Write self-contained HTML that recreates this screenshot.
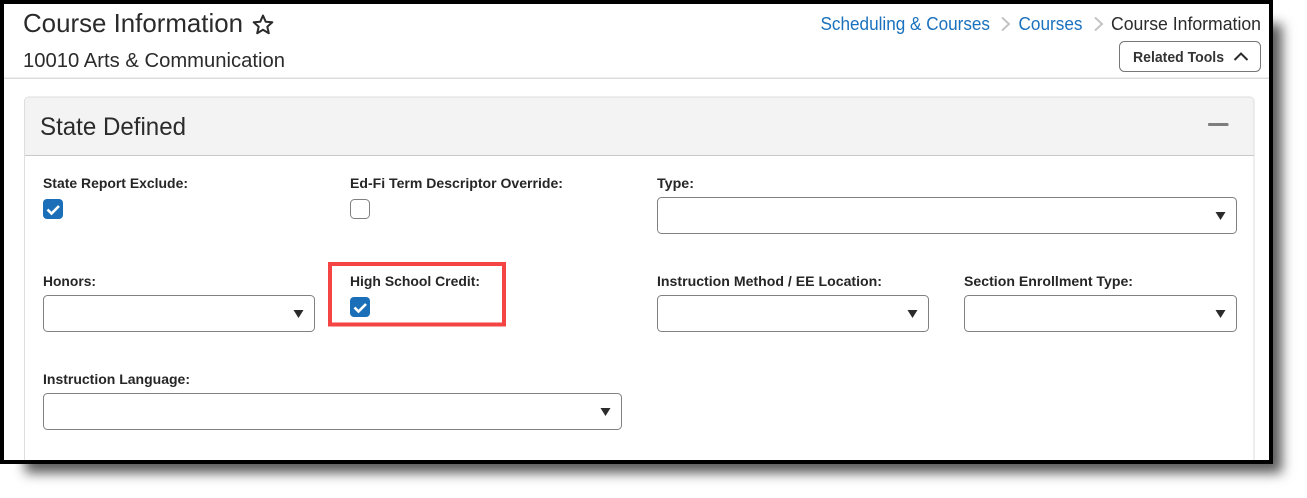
<!DOCTYPE html>
<html>
<head>
<meta charset="utf-8">
<style>
html,body{margin:0;padding:0;background:#fff;}
body{width:1307px;height:498px;overflow:hidden;position:relative;font-family:"Liberation Sans",sans-serif;}
#sh{position:absolute;left:25px;top:24px;width:1257px;height:449px;background:#5a5a5a;filter:blur(6px);}
#fr{position:absolute;left:0;top:0;width:1265px;height:456px;border:4px solid #000;background:#fff;}
svg{position:absolute;left:0;top:0;}
text{font-family:"Liberation Sans",sans-serif;fill:#2b2b2b;}
.l{font-size:14px;font-weight:bold;fill:#262626;}
.a{fill:#1a71bd;font-size:18px;}
.s{fill:#fff;stroke:#808080;stroke-width:1;}
</style>
</head>
<body>
<div id="sh"></div>
<div id="fr"></div>
<svg width="1307" height="498" viewBox="0 0 1307 498" xmlns="http://www.w3.org/2000/svg">
<rect x="4" y="77.5" width="1265" height="1.5" fill="#dcdcdc"/>

<text x="23" y="32" font-size="26" textLength="220" lengthAdjust="spacingAndGlyphs">Course Information</text>
<path d="M263 15.5l2.7 6.2 6.6.6-5 4.4 1.5 6.5-5.8-3.4-5.8 3.4 1.5-6.5-5-4.4 6.600-.6z" fill="none" stroke="#2b2b2b" stroke-width="2" stroke-linejoin="round"/>
<text x="23" y="67" font-size="20" textLength="262" lengthAdjust="spacingAndGlyphs">10010 Arts &amp; Communication</text>

<text class="a" x="820.5" y="30" textLength="169.5" lengthAdjust="spacingAndGlyphs">Scheduling &amp; Courses</text>
<path d="M1002 17.5l7 6.5-7 6.5" fill="none" stroke="#c4c4c4" stroke-width="2"/>
<text class="a" x="1018.5" y="30" textLength="64" lengthAdjust="spacingAndGlyphs">Courses</text>
<path d="M1095 17.5l7 6.5-7 6.5" fill="none" stroke="#c4c4c4" stroke-width="2"/>
<text x="1111" y="30" font-size="18" textLength="150" lengthAdjust="spacingAndGlyphs">Course Information</text>

<rect x="1119.5" y="41.5" width="141" height="30" rx="5" fill="#fff" stroke="#777"/>
<text x="1133" y="62" font-size="14.5" font-weight="bold" textLength="91" lengthAdjust="spacingAndGlyphs" style="fill:#333">Related Tools</text>
<path d="M1234.5 60l6.5-6.5 6.5 6.5" fill="none" stroke="#2b2b2b" stroke-width="2"/>

<path d="M24.5 460V101a4 4 0 0 1 4-4H1250a4 4 0 0 1 4 4V460" fill="#fff" stroke="#dedede"/>
<path d="M25 155V101a3.500 3.500 0 0 1 3.500-3.500H1250a3.500 3.500 0 0 1 3.500 3.500V155z" fill="#f3f3f3"/>
<rect x="25" y="155" width="1229" height="1" fill="#c9c9c9"/>
<text x="40" y="135" font-size="25" textLength="146" lengthAdjust="spacingAndGlyphs">State Defined</text>
<rect x="1208" y="123" width="20.500" height="3" rx="1" fill="#7d7d7d"/>

<text class="l" x="43" y="188" textLength="145" lengthAdjust="spacingAndGlyphs">State Report Exclude:</text>
<rect x="43" y="199" width="20" height="20" rx="4" fill="#1a6fb8"/>
<path d="M47.500 209.500l4 4 7.500-7.500" fill="none" stroke="#fff" stroke-width="2.600"/>

<text class="l" x="350" y="188" textLength="213" lengthAdjust="spacingAndGlyphs">Ed-Fi Term Descriptor Override:</text>
<rect x="350.500" y="199.500" width="19" height="19" rx="4" fill="#fff" stroke="#808080"/>

<text class="l" x="657" y="188" textLength="37" lengthAdjust="spacingAndGlyphs">Type:</text>
<rect class="s" x="657.500" y="197.500" width="579" height="36" rx="4"/>
<path d="M1215.500 212h10l-5 8z" fill="#2b2b2b"/>

<text class="l" x="43" y="286" textLength="53" lengthAdjust="spacingAndGlyphs">Honors:</text>
<rect class="s" x="43.500" y="295.500" width="271" height="36" rx="4"/>
<path d="M293.500 310h10l-5 8z" fill="#2b2b2b"/>

<text class="l" x="350" y="286" textLength="130" lengthAdjust="spacingAndGlyphs">High School Credit:</text>
<rect x="350" y="297" width="20" height="20" rx="4" fill="#1a6fb8"/>
<path d="M354.500 307.500l4 4 7.500-7.500" fill="none" stroke="#fff" stroke-width="2.600"/>
<rect x="330" y="264" width="174" height="60.500" fill="none" stroke="#f44444" stroke-width="4"/>

<text class="l" x="657" y="286" textLength="225" lengthAdjust="spacingAndGlyphs">Instruction Method / EE Location:</text>
<rect class="s" x="657.500" y="295.500" width="271" height="36" rx="4"/>
<path d="M907.500 310h10l-5 8z" fill="#2b2b2b"/>

<text class="l" x="964" y="286" textLength="169" lengthAdjust="spacingAndGlyphs">Section Enrollment Type:</text>
<rect class="s" x="964.500" y="295.500" width="272" height="36" rx="4"/>
<path d="M1215.500 310h10l-5 8z" fill="#2b2b2b"/>

<text class="l" x="43" y="384" textLength="147" lengthAdjust="spacingAndGlyphs">Instruction Language:</text>
<rect class="s" x="43.500" y="393.500" width="578" height="36" rx="4"/>
<path d="M600.500 408h10l-5 8z" fill="#2b2b2b"/>
</svg>
</body>
</html>
